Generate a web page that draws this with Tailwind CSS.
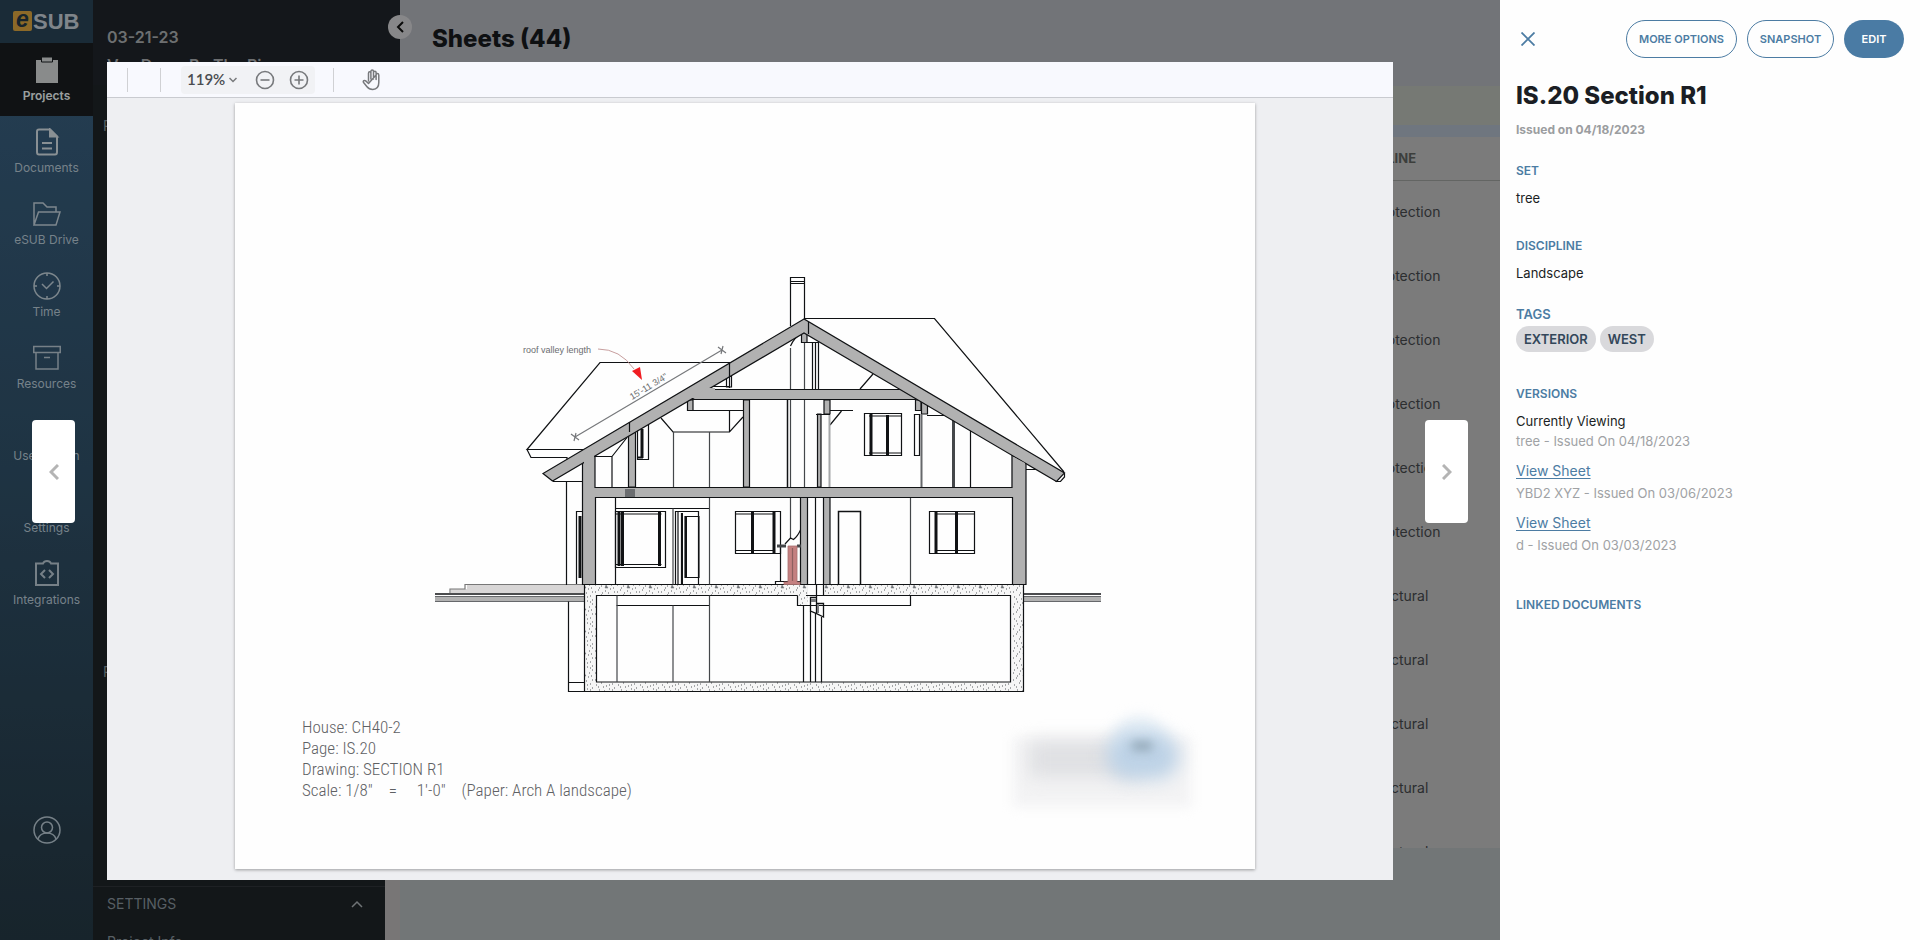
<!DOCTYPE html>
<html lang="en">

<head>
    <meta charset="UTF-8">
    <meta name="viewport" content="width=device-width, initial-scale=1.0">
    <title>eSUB - Sheets</title>
    <script src="https://cdn.jsdelivr.net/npm/@tailwindcss/browser@4"></script>
</head>

<body class="h-screen overflow-hidden bg-[#a4aaab] font-['Inter',sans-serif] text-[#1b1e24]">

    <!-- App behind the overlay -->
    <div class="flex h-full">

        <!-- Icon rail -->
        <nav class="flex w-[93px] shrink-0 flex-col bg-linear-to-b from-[#365a79] via-[#2c4a60] to-[#22343f] text-xs text-[#a9bac5]">
            <a href="#" class="flex h-[43px] items-center justify-center bg-[#263e50]" aria-label="eSUB">
                <svg class="h-7 w-[70px]" viewBox="0 0 70 28">
                    <rect x="1" y="3" width="19" height="20" rx="2" fill="#c9973a" />
                    <text x="4" y="19" font-family="Liberation Sans" font-weight="700" font-style="italic" font-size="23" fill="#22343f">e</text>
                    <text x="21" y="21" font-family="Liberation Sans" font-weight="700" font-size="22" fill="#b6bfc6">SUB</text>
                </svg>
            </a>
            <a href="#" class="flex h-[73px] flex-col items-center gap-1 bg-[#171b1e] pt-[13px] font-semibold text-[#dfe3e3]">
                <svg class="size-7" viewBox="0 0 28 28" fill="#c4c7c7">
                    <path d="M3 4h22v23H3z" />
                    <path d="M8.500 1h11v5h-11z" stroke="#171b1e" />
                </svg>
                Projects
            </a>
            <a href="#" class="flex h-[72px] flex-col items-center gap-1 pt-[12px]">
                <svg class="size-7" viewBox="0 0 28 28" fill="none" stroke="#c4ced4" stroke-width="2">
                    <path d="M4 3.500Q4 1.500 6 1.500h11l7 7V24q0 2.500-2 2.500H6q-2 0-2-2.500z" />
                    <path d="M17 1.500v7h7z" fill="#c4ced4" />
                    <path d="M9 15h10M9 20.500h10" />
                </svg>
                Documents
            </a>
            <a href="#" class="flex h-[72px] flex-col items-center gap-1 pt-[12px]">
                <svg class="size-7" viewBox="0 0 28 28" fill="none" stroke="#b3c1ca" stroke-width="1.500">
                    <path d="M1 25V3h9l4 4h9v5M1 25 5.500 12H27l-4 13z" />
                </svg>
                eSUB Drive
            </a>
            <a href="#" class="flex h-[72px] flex-col items-center gap-1 pt-[12px]">
                <svg class="size-7" viewBox="0 0 28 28" fill="none" stroke="#b3c1ca" stroke-width="1.500">
                    <circle cx="14" cy="14" r="13" />
                    <path d="m9 12 4.500 4.500 7-7M14 1v3M14 24v3M1 14h3M24 14h3" />
                </svg>
                Time
            </a>
            <a href="#" class="flex h-[72px] flex-col items-center gap-1 pt-[12px]">
                <svg class="size-7" viewBox="0 0 28 28" fill="none" stroke="#a9b8c2" stroke-width="1.500">
                    <path d="M0.750 2.500h26.500v6H0.750zM3 8.500h22V25H3zM11 13.500h6" />
                </svg>
                Resources
            </a>
            <a href="#" class="flex h-[72px] flex-col items-center justify-end pb-3">User Admin</a>
            <a href="#" class="flex h-[72px] flex-col items-center justify-end pb-3">Settings</a>
            <a href="#" class="flex h-[72px] flex-col items-center gap-1 pt-[12px]">
                <svg class="size-7" viewBox="0 0 28 28" fill="none" stroke="#a9b8c2" stroke-width="2">
                    <path d="M3 3.500h7q1-2.500 4-2.500t4 2.500h7V25H3zM12 10 8 14l4 4M16 10l4 4-4 4" />
                </svg>
                Integrations
            </a>
            <a href="#" class="mt-auto flex h-[124px] justify-center" aria-label="Account">
                <svg class="size-7" viewBox="0 0 28 28" fill="none" stroke="#a9b8c2" stroke-width="1.500">
                    <circle cx="14" cy="14" r="13" />
                    <circle cx="14" cy="11.500" r="5.500" />
                    <path d="M5 23q2-6 9-6t9 6" />
                </svg>
            </a>
        </nav>

        <!-- Project menu -->
        <div class="relative flex w-[307px] shrink-0 flex-col">
            <div class="h-[85px] bg-[#1e2227] px-3.5 pt-[25px] font-semibold text-[#9da0a2]">
                <p class="leading-6">03-21-23</p>
                <p class="mt-1 leading-6">Van Down By The River</p>
            </div>
            <div class="flex flex-1 bg-[#ada9aa]">
                <div class="flex w-[292px] flex-col bg-[#1c2125] text-sm text-[#7e8890]">
                    <a href="#" class="mt-[31px] px-2.5 leading-5">Plans</a>
                    <a href="#" class="mt-[526px] px-2.5 leading-5">Plans</a>
                    <div class="mt-auto h-[54px] overflow-hidden border-t border-[#2b3034] px-3.5">
                        <button class="flex w-full items-center justify-between pt-[7px] pr-2 leading-5">
                            SETTINGS
                            <svg class="w-3" viewBox="0 0 12 8" fill="none" stroke="#a0a6aa" stroke-width="1.500"><path d="M1 7l5-5 5 5" /></svg>
                        </button>
                        <a href="#" class="mt-[18px] block leading-5">Project Info</a>
                    </div>
                </div>
            </div>
            <button class="absolute top-[15px] -right-3 flex size-6 items-center justify-center rounded-full bg-[#c2c2c4]" aria-label="Collapse menu">
                <svg class="w-2" viewBox="0 0 8 12" fill="none" stroke="#111" stroke-width="2"><path d="M7 1 2 6l5 5" /></svg>
            </button>
        </div>

        <!-- Sheet list -->
        <main class="flex min-w-0 flex-1 flex-col bg-[#a4a6ad]">
            <h1 class="h-[86px] pt-[23px] pl-8 text-2xl leading-8 font-extrabold text-[#15171b]">Sheets (44)</h1>
            <div class="h-[39px] bg-[#a9aea7]"></div>
            <div class="h-3 bg-[#9faab7]"></div>
            <div class="min-h-0 flex-1 overflow-hidden bg-[#b0b1b0]">
                <table class="w-full table-fixed text-left text-sm text-[#3f4245]">
                    <colgroup>
                        <col class="w-[944px]">
                        <col>
                    </colgroup>
                    <thead class="text-[13px]">
                        <tr class="h-[43px] border-b border-[#8f918f]">
                            <th></th>
                            <th class="font-bold text-[#565a57]">DISCIPLINE</th>
                        </tr>
                    </thead>
                    <tbody>
                        <tr class="h-16"><td></td><td>Fire Protection</td></tr>
                        <tr class="h-16"><td></td><td>Fire Protection</td></tr>
                        <tr class="h-16"><td></td><td>Fire Protection</td></tr>
                        <tr class="h-16"><td></td><td>Fire Protection</td></tr>
                        <tr class="h-16"><td></td><td>Fire Protection</td></tr>
                        <tr class="h-16"><td></td><td>Fire Protection</td></tr>
                        <tr class="h-16"><td></td><td>Architectural</td></tr>
                        <tr class="h-16"><td></td><td>Architectural</td></tr>
                        <tr class="h-16"><td></td><td>Architectural</td></tr>
                        <tr class="h-16"><td></td><td>Architectural</td></tr>
                        <tr class="h-16"><td></td><td>Architectural</td></tr>
                    </tbody>
                </table>
            </div>
            <div class="h-[92px] bg-[#a4aaab]"></div>
        </main>
    </div>

    <!-- Sheet viewer overlay -->
    <div class="fixed inset-0 z-10 flex bg-black/30">
        <div class="relative min-w-0 flex-1 px-[107px] pt-[62px] pb-[60px]">

            <section class="flex h-full flex-col bg-[#eeeff2]">
                <div class="flex h-9 shrink-0 items-center border-b border-[#c9cbd0] bg-[#f8f9fe] pl-5">
                    <span class="h-6 w-px bg-[#d0d1d4]"></span>
                    <span class="ml-8 h-6 w-px bg-[#d0d1d4]"></span>
                    <div class="ml-5 flex h-7 items-center rounded bg-[#f1f2f5] px-1.5">
                        <label class="relative flex items-center">
                            <select class="w-[50px] appearance-none bg-transparent font-['Lato',sans-serif] text-[15px] font-semibold text-[#4a4c50]" aria-label="Zoom level">
                                <option>119%</option>
                            </select>
                            <svg class="pointer-events-none absolute right-0 w-2" viewBox="0 0 8 6" fill="none" stroke="#77797c" stroke-width="1.500"><path d="M0.500 1 4 4.500 7.500 1" /></svg>
                        </label>
                        <button class="ml-[18px]" aria-label="Zoom out">
                            <svg class="size-5" viewBox="0 0 20 20" fill="none" stroke="#77797c" stroke-width="1.600"><circle cx="10" cy="10" r="8.500" /><path d="M5.500 10h9" /></svg>
                        </button>
                        <button class="ml-3.5" aria-label="Zoom in">
                            <svg class="size-5" viewBox="0 0 20 20" fill="none" stroke="#77797c" stroke-width="1.600"><circle cx="10" cy="10" r="8.500" /><path d="M5.500 10h9M10 5.500v9" /></svg>
                        </button>
                    </div>
                    <span class="ml-[18px] h-6 w-px bg-[#d0d1d4]"></span>
                    <button class="ml-7" aria-label="Pan">
                        <svg class="size-[22px]" viewBox="0 0 22 22" fill="none" stroke="#77797c" stroke-width="1.500" stroke-linecap="round" stroke-linejoin="round">
                            <path d="M6.500 12V4.200q0-1.400 1.200-1.400t1.200 1.400V10M8.900 4V2.500q0-1.400 1.300-1.400t1.300 1.400V10M11.500 3.600q0-1.400 1.300-1.400t1.300 1.400V10.500M14.100 6q0-1.500 1.300-1.500t1.400 1.500v7.500q0 6.500-6 7-3.800 0-5.800-2.700L1.600 13.500q-.7-1.100.2-1.800 1-.6 1.900.2l2.800 2.600z" />
                        </svg>
                    </button>
                </div>

                <div class="flex min-h-0 flex-1 justify-center overflow-hidden pt-[5px] pr-2.5">
                    <div class="relative flex h-[766px] w-[1020px] flex-col bg-[#fefefe] shadow-[0_1px_3px_rgba(0,0,0,0.35)]">

                        <!-- Section drawing -->
                        <svg class="mt-[157px] ml-[185px] h-[440px] w-[700px] shrink-0" viewBox="420 260 700 440" fill="none" stroke="#101214" stroke-width="1.200">
                            <defs>
                                <pattern id="concrete" width="22" height="22" patternUnits="userSpaceOnUse">
                                    <rect width="22" height="22" fill="#f6f6f6" stroke="none" />
                                    <path d="M2 3h1M7 1h1M12 4h1M18 2h1M5 8h1M10 9h1M15 7h1M20 10h1M1 13h1M7 14h1M17 13h1M4 18h1M11 19h1M16 17h1M20 20h1M8 21h1M4 5h1M9 5h1M15 3h1M20 6h1M2 10h1M8 11h1M18 8h1M5 16h1M19 16h1M1 20h1M14 21h1" stroke="#55585c" stroke-width="1" />
                                    <path d="m12 13 2 3h-3z" fill="#6f7376" stroke="#6f7376" stroke-width=".5" />
                                </pattern>
                            </defs>

                            <!-- ground -->
                            <path d="M467 585h117v8H451v-4h16z" fill="#d8d6d6" stroke="none" />
                            <path d="M584 584.500H465v4.500h-15v4" stroke="#777" />
                            <path d="M435 597h149v5H435zM1023 597h78v5h-78z" fill="#b1b1b1" stroke="none" />
                            <path d="M435 594h149M1023 594h78" stroke-width="1.500" />
                            <path d="M435 596.500h149M435 601.500h149M1023 596.500h78M1023 601.500h78" stroke="#66686b" />

                            <!-- basement -->
                            <path d="M584.500 584.500h222v11h-210v86.500h414v-86.500H823.500v-11h200v107h-439z" fill="url(#concrete)" />
                            <path d="M797.500 595.500v10h10v-21h-10z" fill="url(#concrete)" stroke="none" />
                            <path d="M568.500 601.500v90h16M568.500 682.500h16M807 584.500h17M806 595.500h17.500" />
                            <path d="M616.500 605.500h93M797.500 595.500v10h113v-10M803.500 605.500V682M810.500 611V682M815.500 613V682M821.500 617V682M816.500 585v12" />
                            <path d="M617 595.500V682M673 605.500V682M709.500 595.500V682" stroke="#44474a" />
                            <path d="M810.500 597.500h6v16l-6-2.500zM816.500 603.500h7v13.500l-7-3.500z" stroke-width="1.300" />
                            <path d="M811 599h5v3h-5zM817 604h2v9h-2z" fill="#77797c" stroke="none" />

                            <!-- roof planes -->
                            <path d="M804 318.500h130.500L1064 472M730 362.500H600L527 449.500h56M527 449.500l4 8h36M567 457v3" />
                            <path d="M790.500 326v-48.500h14V319M790 281.500h15M790 283.500h15" />
                            <path d="M790.500 348V487M804.500 333V487" stroke="#44474a" />
                            <path d="M790.500 346q4-9 12-13" />

                            <!-- upper floor -->
                            <path d="M801.500 332h5.500v10.500h-5.500z" fill="#b1b1b1" />
                            <path d="M807 342.500h12M812.500 343v46M815.500 343v46M818.500 343v46M873 374l-13 15" />
                            <path d="M687.500 400h5.500v10.500h-5.500z" fill="#b1b1b1" />
                            <path d="M687 410.500h56M712 386.500h18M726.500 376.500h5v10.500h-5z" />
                            <path d="M661 418l12 14h56.500l13.500-15M729.500 411v21" />
                            <path d="M673.500 432v55M709.500 432v55" stroke="#44474a" />
                            <path d="M743.500 400h6v87h-6zM628.500 431l7-4v60h-7zM817.500 414h3.500v73h-3.500zM824 400h6v14h-6zM915.500 400h5.500v10.500h-5.500zM921.500 402h6v12h-6z" fill="#b1b1b1" />
                            <path d="M787.500 400v87" stroke-width="1.500" />
                            <path d="M816 414.500h14M830 410.500h23M841.500 411 830 425M927 415.500h17M970.500 430v57M1012.500 455v32M553 481.500h29M1026 469.500h11M595 456.500h17v30.500M612 456.500l15-19" />
                            <path d="M829.500 415v72" stroke="#a5a7a9" stroke-width="2" />
                            <path d="M921.500 414v73" stroke="#66686b" stroke-width="2" />
                            <path d="M953.500 420v67" stroke="#44474a" stroke-width="3" />
                            <path d="M914.500 414.500h5v41h-5z" />
                            <path d="M637.500 428v31.500h11V424" />
                            <path d="M642 429v29" stroke-width="3" />
                            <path d="M637 457.500h6" stroke-width="2" />
                            <path d="M864.500 413.500h37v42h-37zM869 416h32M869 453h32" />
                            <path d="M871 414v41M887.500 415v40" stroke-width="3" />

                            <!-- cut structure -->
                            <path d="M582.500 463v121.500h13v-87h417v87h13.500V463l-14-8v32.500h-417V454z" fill="#b1b1b1" />
                            <path d="M704 389.500h199l16 10H687z" fill="#b1b1b1" />
                            <path d="m804 319-261 154.500 9.500 7.500L804 333l252.500 148.500 8-8.500z" fill="#b1b1b1" />
                            <path d="M584 455l10-6v14l-10 4zM1013.500 457l11.500 6v8l-11.500-4zM584 488h20v9h-20zM1004 488h20v9h-20zM690 398l17-10h8v10z" fill="#b1b1b1" stroke="none" />
                            <path d="M629.500 422v10M729.500 362v26M808.500 322v12" />
                            <path d="M1064.500 473v4l-4 4.500h-5" />
                            <path d="M625 489h10v8h-10z" fill="#6b6d70" stroke="none" />

                            <!-- ground floor -->
                            <path d="M566.500 481.500V585M615.500 498v86.500M615 508.500h94" />
                            <path d="M673 508.500v76M709.500 498v86.500M790.500 498v41M910.500 498v86.500" stroke="#44474a" />
                            <path d="M582 511.500h-5.500V584" />
                            <path d="M580 516v62" stroke-width="3" />
                            <path d="M615.500 511.500h50v56h-50zM615.500 514h46M615.500 564.500h46" />
                            <path d="M619 512v54M622.500 512v54M659.500 512v54" stroke-width="3" />
                            <path d="M675.500 584.500v-73h23v73zM678 512v72M681.500 513v71M685 516.500h14v61h-14z" />
                            <path d="M682 513v71M686 516v62" stroke-width="2" />
                            <path d="M735.500 511.500h45v42h-45zM736 514h39M736 550.500h39" />
                            <path d="M752.500 512v41M774 512v41" stroke-width="3" />
                            <path d="M800.500 497.500h7v87h-7zM823.500 497.500h6.500v87h-6.500z" fill="#b1b1b1" />
                            <path d="M815.500 498v86.500" />
                            <path d="M838.500 584.500v-73h22v73" stroke-width="1.500" />
                            <path d="M929.500 511.500h45v42h-45zM935 514h39M935 550.500h39" />
                            <path d="M936 512v41M956.500 512v41" stroke-width="3" />

                            <!-- stove -->
                            <path d="M780.500 547v34M775.500 584v-2.500h25M785 544l5.500-6 3 1.500q4-3 7-9.500" />
                            <path d="M777 546h9M797 546h4" stroke-width="3" stroke="#44474a" />
                            <path d="M788 546h9v36h3v2.500h-16V582h4z" fill="#c48080" stroke="#a87070" stroke-width=".8" />
                            <path d="M792.500 548v33" stroke="#8d6060" />

                            <!-- dimension -->
                            <g stroke="#77797c">
                                <path d="m575 437 147-87M571 434l8 6M574 441l2-8M718 347l8 6M721 354l2-8" />
                                <path d="M598 349q22 0 36 20" stroke="#b98585" stroke-width=".8" />
                            </g>
                            <path d="m632 371 8-4 2 13z" fill="#f01d22" stroke="none" />
                            <g font-family="Liberation Sans, sans-serif" fill="#6b6d70" stroke="none">
                                <text x="523" y="353" font-size="9">roof valley length</text>
                                <text x="632" y="400" font-size="9" transform="rotate(-31 632 400)">15'-11 3/4"</text>
                            </g>
                        </svg>

                        <!-- Title block -->
                        <div class="mt-[17px] ml-[67px] font-['Roboto_Condensed','Open_Sans_Condensed','Liberation_Sans',sans-serif] text-[17px] leading-[21px] font-light text-[#5f6164]">
                            <p>House: CH40-2</p>
                            <p>Page: IS.20</p>
                            <p>Drawing: SECTION R1</p>
                            <p class="flex"><span>Scale: 1/8"</span><span class="ml-4">=</span><span class="ml-5">1'-0"</span><span class="ml-4">(Paper: Arch A landscape)</span></p>
                        </div>

                        <!-- Redacted stamp -->
                        <div class="absolute right-[56px] bottom-[58px] h-[94px] w-[190px]">
                            <div class="absolute top-5 left-1 h-[70px] w-[178px] bg-[#f3f3f4] blur-[6px]"></div>
                            <div class="absolute top-6 left-5 h-[36px] w-[110px] bg-[#dfe0e3] blur-[9px]"></div>
                            <div class="absolute top-0 left-[104px] h-[50px] w-[52px] rounded-full bg-[#e3edf5] blur-[7px]"></div>
                            <div class="absolute top-4 left-[98px] h-[46px] w-[72px] rounded-full bg-[#bdd2e6] blur-[9px]"></div>
                            <div class="absolute top-[24px] left-[122px] h-[10px] w-[22px] rounded-full bg-[#96abbb] blur-[5px]"></div>
                        </div>
                    </div>
                </div>
            </section>

            <button class="absolute top-[420px] left-8 flex h-[103px] w-[43px] items-center justify-center rounded bg-white" aria-label="Previous sheet">
                <svg class="w-2.5" viewBox="0 0 10 16" fill="none" stroke="#b4b4b4" stroke-width="3"><path d="M9 1 2 8l7 7" /></svg>
            </button>
            <button class="absolute top-[420px] right-8 flex h-[103px] w-[43px] items-center justify-center rounded bg-white" aria-label="Next sheet">
                <svg class="w-2.5" viewBox="0 0 10 16" fill="none" stroke="#b4b4b4" stroke-width="3"><path d="m1 1 7 7-7 7" /></svg>
            </button>
        </div>

        <!-- Sheet details -->
        <aside class="w-[420px] shrink-0 bg-[#fefefe] px-4 pt-5 text-[13px] leading-5">
            <div class="flex h-[38px] items-center gap-2.5 text-[11px] font-semibold text-[#4c7ca3]">
                <button class="mr-auto ml-[5px]" aria-label="Close">
                    <svg class="size-3.5" viewBox="0 0 14 14" fill="none" stroke="currentColor" stroke-width="1.800"><path d="m0.500 0.500 13 13M13.500 0.500l-13 13" /></svg>
                </button>
                <button class="h-full w-[111px] rounded-full border border-[#4c7ca3]">MORE OPTIONS</button>
                <button class="h-full w-[87px] rounded-full border border-[#4c7ca3]">SNAPSHOT</button>
                <button class="h-full w-[60px] rounded-full bg-[#4a7ba4] text-white">EDIT</button>
            </div>

            <h2 class="mt-[22px] text-2xl leading-8 font-extrabold">IS.20 Section R1</h2>
            <p class="mt-2 text-xs leading-5 font-bold text-[#9b9da0]">Issued on 04/18/2023</p>

            <h3 class="mt-[21px] text-xs leading-5 font-semibold text-[#4c7ca3]">SET</h3>
            <p class="mt-[7px]">tree</p>

            <h3 class="mt-7 text-xs leading-5 font-semibold text-[#4c7ca3]">DISCIPLINE</h3>
            <p class="mt-[7px]">Landscape</p>

            <h3 class="mt-[21px] text-[13px] leading-5 font-semibold text-[#4c7ca3]">TAGS</h3>
            <div class="mt-0.5 flex gap-1 text-[13px] leading-[26px] font-semibold text-[#33475a]">
                <span class="rounded-full bg-[#d9d9dc] px-2">EXTERIOR</span>
                <span class="rounded-full bg-[#d9d9dc] px-2">WEST</span>
            </div>

            <h3 class="mt-8 text-xs leading-5 font-semibold text-[#4c7ca3]">VERSIONS</h3>
            <p class="mt-[7px]">Currently Viewing</p>
            <p class="text-[#a0a2a5]">tree - Issued On 04/18/2023</p>
            <a href="#" class="mt-2.5 block text-sm leading-5 text-[#4c7ca3] underline underline-offset-2">View Sheet</a>
            <p class="mt-0.5 text-[#a0a2a5]">YBD2 XYZ - Issued On 03/06/2023</p>
            <a href="#" class="mt-2.5 block text-sm leading-5 text-[#4c7ca3] underline underline-offset-2">View Sheet</a>
            <p class="mt-0.5 text-[#a0a2a5]">d - Issued On 03/03/2023</p>

            <h3 class="mt-10 text-xs leading-5 font-semibold text-[#4c7ca3]">LINKED DOCUMENTS</h3>
        </aside>
    </div>

</body>

</html>
